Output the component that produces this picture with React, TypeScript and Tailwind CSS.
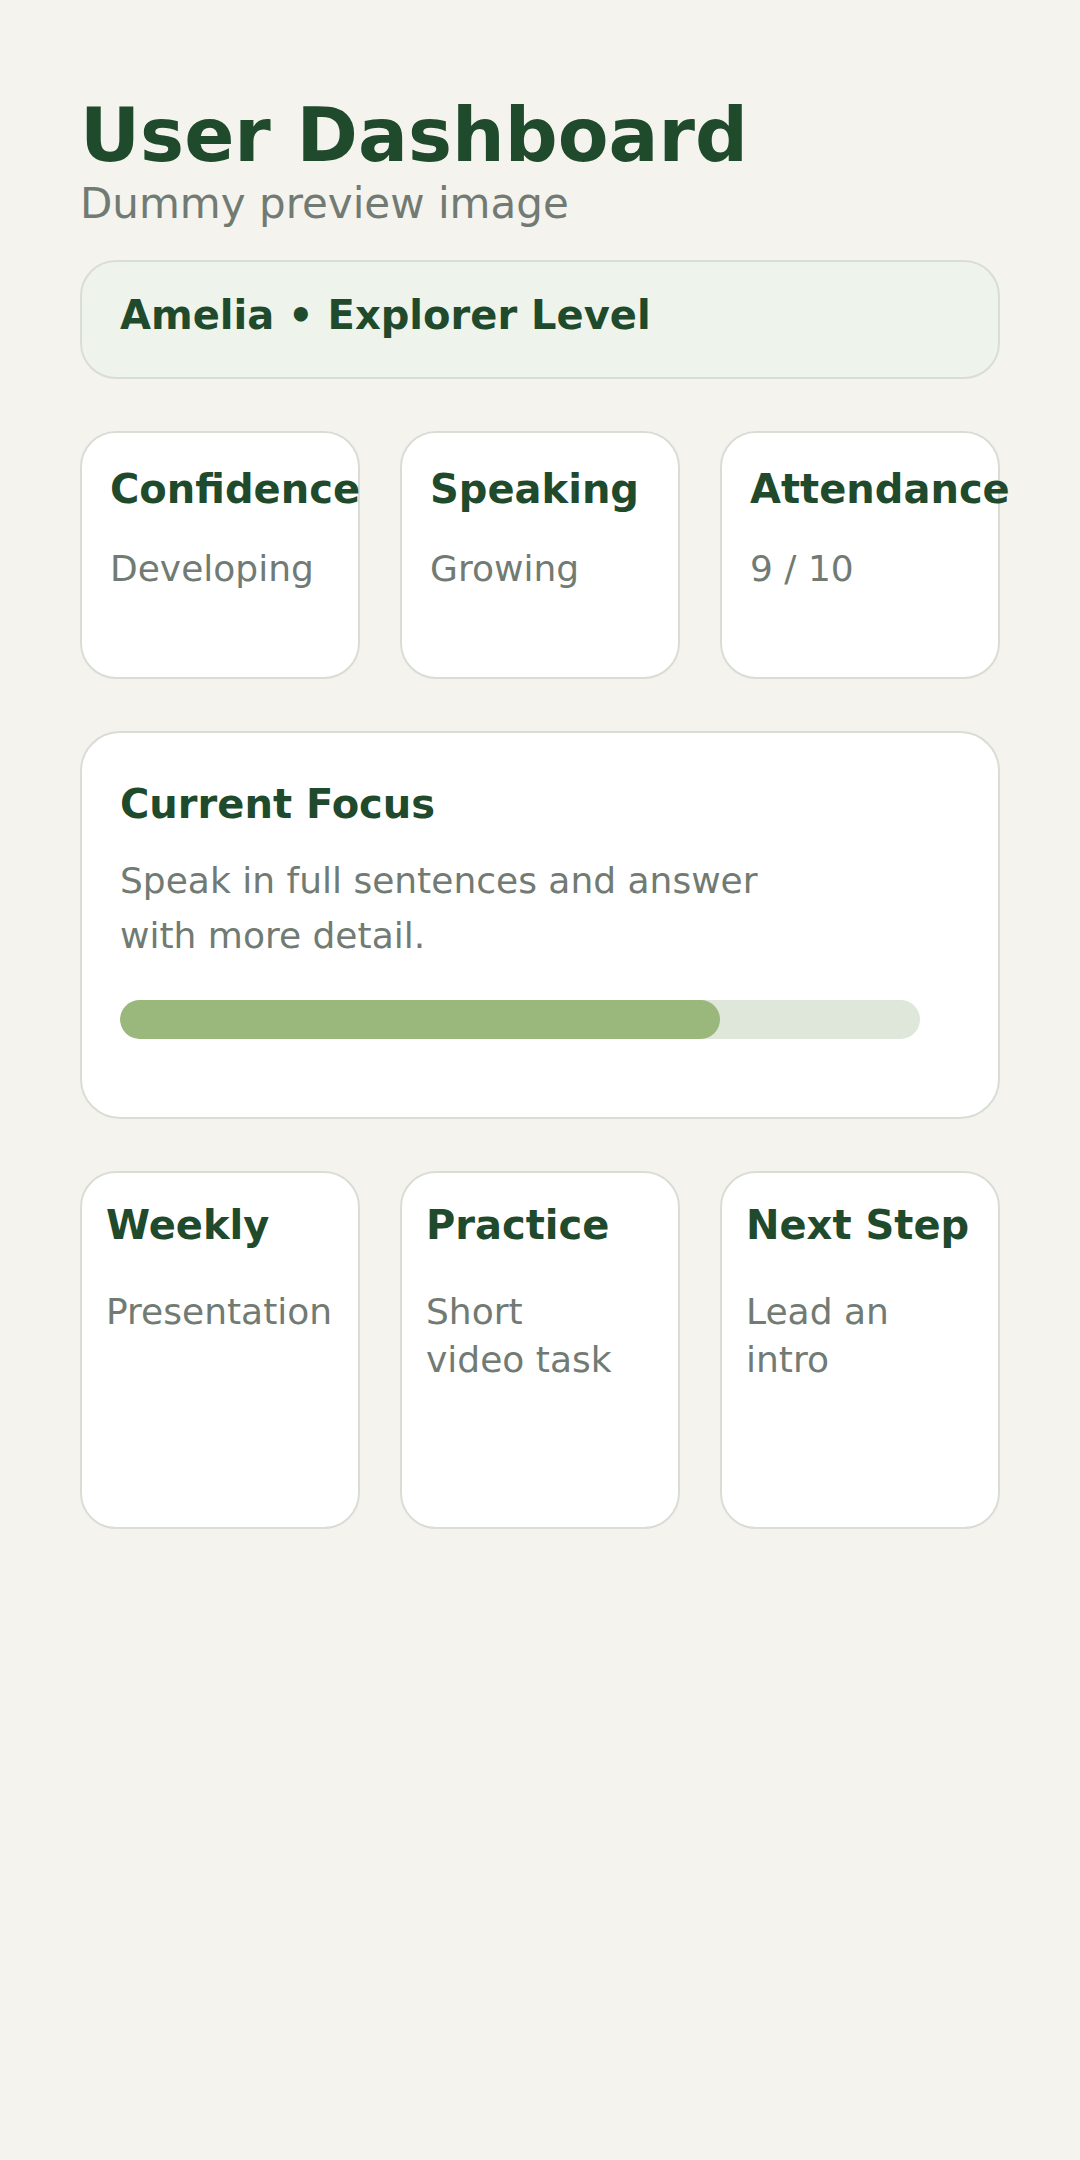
import * as React from 'react';

const stats = [
  { label: 'Confidence', value: 'Developing' },
  { label: 'Speaking', value: 'Growing' },
  { label: 'Attendance', value: '9 / 10' },
];

const plans = [
  { label: 'Weekly', value: 'Presentation' },
  { label: 'Practice', value: 'Short video task' },
  { label: 'Next Step', value: 'Lead an intro' },
];

export default function App() {
  const progress = 75;

  return (
    <div className="min-h-[2160px] w-full bg-[#f4f3ee] px-[80px] pt-[95px] font-['DejaVu_Sans',sans-serif]">
      {/* HEADER */}
      <h1 className="text-[74px] leading-[80px] font-bold text-[#1f4a2c]">User Dashboard</h1>
      <p className="mt-[5px] text-[42px] leading-[48px] text-[#717b73]">Dummy preview image</p>

      <div className="mt-[32px] flex w-[920px] flex-col gap-[52px]">
        {/* PROFILE BANNER */}
        <div className="h-[119px] rounded-[36px] border-2 border-[#d9ddd5] bg-[#eef3ec] px-[38px] pt-[31px]">
          <span className="text-[40px] leading-[44px] font-bold text-[#1f4a2c]">Amelia • Explorer Level</span>
        </div>

        {/* STAT CARDS */}
        <div className="grid grid-cols-3 gap-[40px]">
          {stats.map((s) => (
            <div
              key={s.label}
              className="h-[248px] rounded-[36px] border-2 border-[#d9ddd5] bg-white px-[28px] pt-[34px]"
            >
              <div className="text-[40px] leading-[44px] font-bold whitespace-nowrap text-[#1f4a2c]">{s.label}</div>
              <div className="mt-[36px] text-[36px] leading-[44px] text-[#717b73]">{s.value}</div>
            </div>
          ))}
        </div>

        {/* CURRENT FOCUS */}
        <div className="rounded-[40px] border-2 border-[#d9ddd5] bg-white px-[38px] pt-[49px] pb-[78px]">
          <div className="text-[40px] leading-[44px] font-bold text-[#1f4a2c]">Current Focus</div>
          <p className="mt-[27px] max-w-[690px] text-[36px] leading-[55px] text-[#717b73]">
            Speak in full sentences and answer with more detail.
          </p>
          <div className="mt-[37px] h-[39px] w-[800px] overflow-hidden rounded-full bg-[#dfe6da]">
            <div className="h-full rounded-full bg-[#9ab87b]" style={{ width: `${progress}%` }} />
          </div>
        </div>

        {/* PLAN CARDS */}
        <div className="grid grid-cols-3 gap-[40px]">
          {plans.map((p) => (
            <div
              key={p.label}
              className="h-[358px] rounded-[36px] border-2 border-[#d9ddd5] bg-white px-[24px] pt-[30px]"
            >
              <div className="text-[40px] leading-[44px] font-bold whitespace-nowrap text-[#1f4a2c]">{p.label}</div>
              <div className="mt-[41px] max-w-[196px] text-[36px] leading-[48px] text-[#717b73]">{p.value}</div>
            </div>
          ))}
        </div>
      </div>
    </div>
  );
}
